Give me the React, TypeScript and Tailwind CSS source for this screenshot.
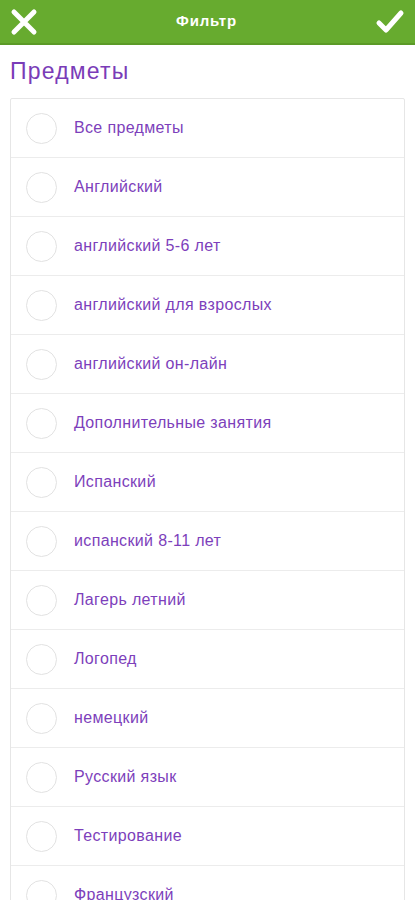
const subjects = [
  "Все предметы",
  "Английский",
  "английский 5-6 лет",
  "английский для взрослых",
  "английский он-лайн",
  "Дополнительные занятия",
  "Испанский",
  "испанский 8-11 лет",
  "Лагерь летний",
  "Логопед",
  "немецкий",
  "Русский язык",
  "Тестирование",
  "Французский",
];

export default function App() {
  return (
    <div className="w-[415px] h-[900px] overflow-hidden bg-white font-['Liberation_Sans',Arial,sans-serif]">
      <div className="h-[45px] bg-[#67ab2f] border-b-2 border-[#5b9a27] flex items-center justify-between px-[10px]">
        <svg width="28" height="28" viewBox="0 0 28 28">
          <path d="M4 4 L24 24 M24 4 L4 24" stroke="white" strokeWidth="5" strokeLinecap="round" />
        </svg>
        <span className="text-white text-[15px] font-bold tracking-[0.8px]">Фильтр</span>
        <svg width="30" height="28" viewBox="0 0 30 28">
          <path d="M4 15 L11 22 L26 5" stroke="white" strokeWidth="5" fill="none" strokeLinecap="round" strokeLinejoin="round" />
        </svg>
      </div>

      <h1 className="px-[10px] pt-[13px] pb-[13px] text-[23px] leading-[27px] tracking-[1.2px] text-[#7a3cb8]">Предметы</h1>

      <ul className="mx-[10px] border border-[#e6e6e6] rounded-[2px]">
        {subjects.map((s, idx) => (
          <li key={idx} className="h-[59px] flex items-center border-b border-[#ececec] pl-[15px]">
            <span className="w-[31px] h-[31px] rounded-full border border-[#e2e2e2] shrink-0" />
            <span className="ml-[17px] text-[16px] tracking-[0.35px] text-[#7d3fbb] whitespace-nowrap">{s}</span>
          </li>
        ))}
      </ul>
    </div>
  );
}
